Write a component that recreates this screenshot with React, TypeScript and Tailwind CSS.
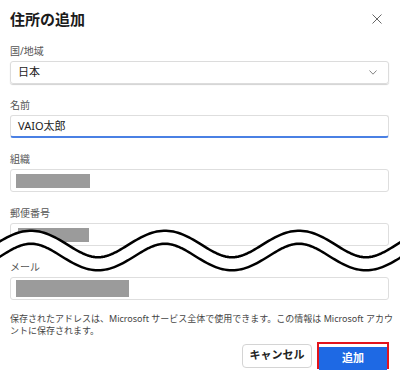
import React from "react";

const font = "font-['Noto_Sans','Noto_Sans_CJK_JP',sans-serif]";

function Field({
  label,
  children,
  focused,
}: {
  label: string;
  children?: React.ReactNode;
  focused?: boolean;
}) {
  return (
    <div className="mt-[14px]">
      <div className="text-[10px] leading-[14px] text-[#555]">{label}</div>
      <div
        className={
          focused
            ? "mt-[3px] flex h-[23px] items-center rounded-[3px] border border-[#dedede] border-b-[2px] border-b-[#4a80e4] pl-[7px] text-[11px] text-[#222]"
            : "mt-[3px] flex h-[23px] items-center rounded-[3px] border border-[#dedede] pl-[5px] text-[11px] text-[#222]"
        }
      >
        {children}
      </div>
    </div>
  );
}

// wavy "cut" marker drawn over the form
function Wave() {
  const P = 134;
  const x0 = 31;
  const c = 250.5;
  const A = 13.25;
  let d = "";
  for (let x = -10; x <= 410; x += 2) {
    const y = c - A * Math.cos((2 * Math.PI * (x - x0)) / P);
    d += (x === -10 ? "M" : "L") + x + " " + y.toFixed(2) + " ";
  }
  return (
    <svg className="pointer-events-none absolute left-0 top-0" width="400" height="379" viewBox="0 0 400 379">
      <path d={d} fill="none" stroke="#000" strokeWidth="15.5" />
      <path d={d} fill="none" stroke="#fff" strokeWidth="10.5" />
    </svg>
  );
}

export default function App() {
  return (
    <div className={`relative h-[379px] w-[400px] overflow-hidden bg-white pl-[10px] pr-[11px] ${font}`}>
      <div className="flex items-center justify-between pt-[8px]">
        <h1 className="text-[15px] font-bold leading-[22px] text-[#1b1b1b]">住所の追加</h1>
        <svg className="mr-[7px]" width="10" height="10" viewBox="0 0 10 10">
          <path d="M0.5 0.5 L9.5 9.5 M9.5 0.5 L0.5 9.5" stroke="#666" strokeWidth="1" fill="none" />
        </svg>
      </div>

      <div className="mt-[14px]">
        <div className="text-[10px] leading-[14px] text-[#555]">国/地域</div>
        <div className="mt-[3px] flex h-[23px] items-center justify-between rounded-[3px] border border-[#dcdcdc] pl-[7px] pr-[11px] text-[11px] text-[#222] shadow-[0_1px_1px_rgba(0,0,0,0.18)]">
          <span>日本</span>
          <svg width="8" height="5" viewBox="0 0 8 5">
            <path d="M0.5 0.5 L4 4.2 L7.5 0.5" stroke="#777" strokeWidth="0.9" fill="none" />
          </svg>
        </div>
      </div>

      <Field label="名前" focused>
        <span>VAIO太郎</span>
      </Field>
      <Field label="組織">
        <div className="h-[14px] w-[74px] bg-[#9b9b9b]" />
      </Field>
      <Field label="郵便番号">
        <div className="ml-[2px] h-[14px] w-[71px] bg-[#9b9b9b]" />
      </Field>
      <Field label="メール">
        <div className="h-[17px] w-[113px] bg-[#9b9b9b]" />
      </Field>

      <p className="mt-[13px] text-[9px] leading-[12px] text-[#444] whitespace-nowrap">
        保存されたアドレスは、Microsoft サービス全体で使用できます。この情報は Microsoft アカウ
        <br />
        ントに保存されます。
      </p>

      <div className="mt-[5px] flex items-center justify-end gap-[5px]">
        <button className="h-[24px] w-[70px] rounded-[4px] border border-[#d4d4d4] bg-white text-[11px] font-bold text-[#222]">
          キャンセル
        </button>
        <div className="h-[27px] w-[72px] border-[2px] border-[#e3141c]">
          <button className="h-full w-full bg-[#1e69e4] text-[11px] font-bold text-white">追加</button>
        </div>
      </div>

      <Wave />
    </div>
  );
}
